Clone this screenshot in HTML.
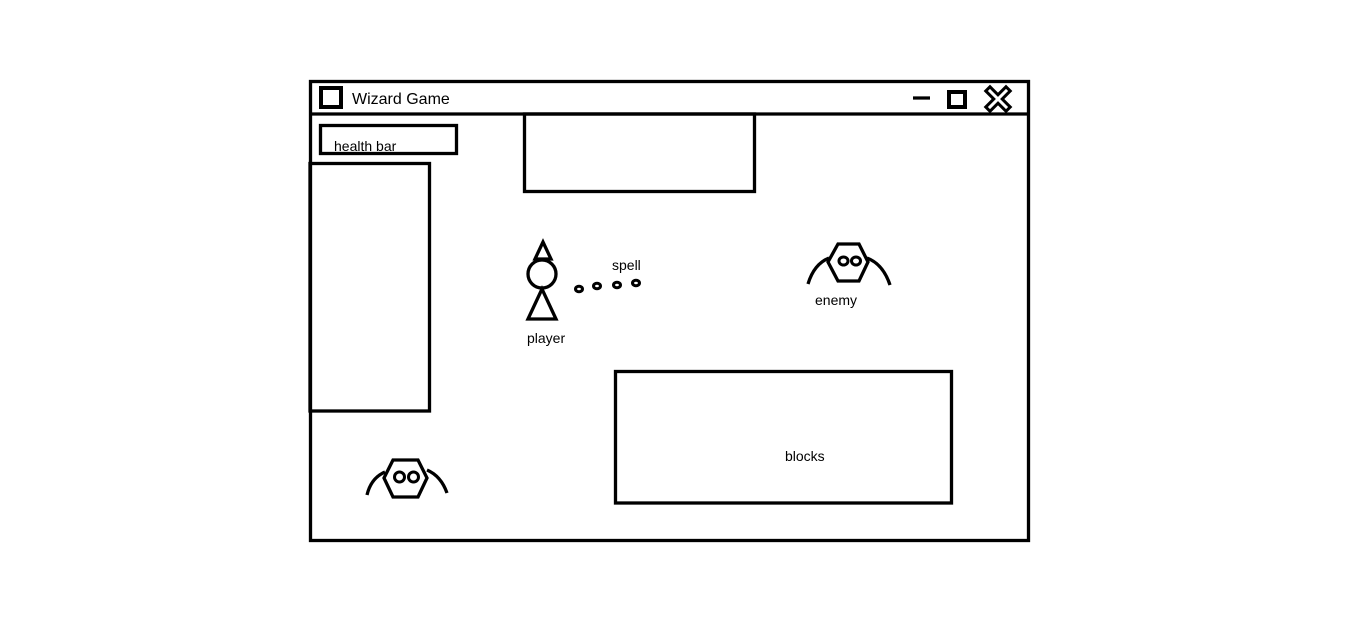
<!DOCTYPE html>
<html><head><meta charset="utf-8"><style>
html,body{margin:0;padding:0;background:#fff;width:1350px;height:619px;overflow:hidden}
svg{display:block}
text{font-family:"Liberation Sans",sans-serif;fill:#000}
</style></head><body>
<svg width="1350" height="619" viewBox="0 0 1350 619" xmlns="http://www.w3.org/2000/svg">
<g fill="none" stroke="#000" stroke-width="3.3">
<rect x="310.5" y="81.5" width="718" height="459"/>
<line x1="310" y1="114" x2="1029" y2="114"/>
<rect x="321" y="88" width="20" height="19" stroke-width="4"/>
<line x1="913" y1="98" x2="930" y2="98"/>
<rect x="949" y="92" width="16" height="15" stroke-width="4"/>
<rect x="320.5" y="125.5" width="136" height="28"/>
<rect x="310" y="163.5" width="119.5" height="247.5"/>
<rect x="524.5" y="114" width="230" height="77.5"/>
<rect x="615.5" y="371.5" width="336" height="131.5"/>
<polygon points="543,242 535,259 551,259"/>
<circle cx="542" cy="274" r="14"/>
<polygon points="542,289 528,319 556,319"/>
<ellipse cx="579" cy="289" rx="3.5" ry="2.8" stroke-width="3"/>
<ellipse cx="597" cy="286" rx="3.5" ry="2.8" stroke-width="3"/>
<ellipse cx="617" cy="285" rx="3.5" ry="2.8" stroke-width="3"/>
<ellipse cx="636" cy="283" rx="3.5" ry="2.8" stroke-width="3"/>
<polygon points="838,244 859,244 868,262 859,281 838,281 828,262"/>
<ellipse cx="843.5" cy="261" rx="4.5" ry="4" stroke-width="3"/>
<ellipse cx="856" cy="261" rx="4.5" ry="4" stroke-width="3"/>
<path d="M829,258 Q814,264 808,284"/>
<path d="M867,258 Q883,264 890,285"/>
<polygon points="393,460 418,460 427,478 418,497 393,497 384,478"/>
<circle cx="399.5" cy="477" r="5" stroke-width="3"/>
<circle cx="413.5" cy="477" r="5" stroke-width="3"/>
<path d="M385,472 Q371,478 367,495"/>
<path d="M427,470 Q441,476 447,493"/>
</g>
<g stroke-linecap="square">
<path d="M990,91 L1006,107 M1006,91 L990,107" stroke="#000" stroke-width="9"/>
<path d="M990,91 L1006,107 M1006,91 L990,107" stroke="#fff" stroke-width="3"/>
</g>
<text x="352" y="104" font-size="16">Wizard Game</text>
<text x="334" y="151" font-size="14">health bar</text>
<text x="527" y="343" font-size="14">player</text>
<text x="612" y="270" font-size="14">spell</text>
<text x="815" y="305" font-size="14">enemy</text>
<text x="785" y="461" font-size="14">blocks</text>
</svg>
</body></html>
